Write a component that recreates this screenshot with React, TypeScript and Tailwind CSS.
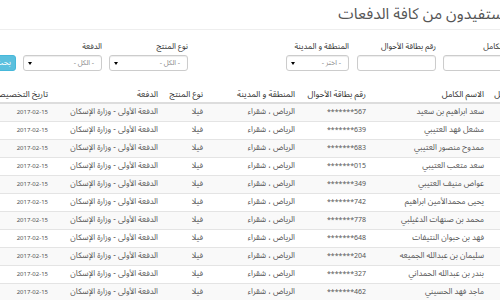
import React from 'react';

const rows: [string, string][] = [
  ['سعد ابراهيم بن سعيد', '*******567'],
  ['مشعل فهد العتيبي', '*******639'],
  ['ممدوح منصور العتيبي', '*******683'],
  ['سعد متعب العتيبي', '*******015'],
  ['عواض منيف العتيبي', '*******349'],
  ['يحيى محمدالأمين ابراهيم', '*******742'],
  ['محمد بن صنهات الدغيلبي', '*******778'],
  ['فهد بن حبوان النتيفات', '*******648'],
  ['سليمان بن عبدالله الجميعه', '*******204'],
  ['بندر بن عبدالله الحمداني', '*******327'],
  ['ماجد فهد الحسيني', '*******462'],
];

const font = "font-['Noto_Sans_Arabic','DejaVu_Sans',sans-serif]";

const Label = ({ children }: { children: React.ReactNode }) => (
  <div className="h-[10px] mb-[3px] text-[8px] leading-[10px] text-[#333] whitespace-nowrap">
    {children}
  </div>
);

const SelectBox = ({ text }: { text: string }) => (
  <div className="h-[16px] flex items-center justify-between border border-[#ccc] rounded-[3px] bg-white shadow-[inset_0_1px_1px_rgba(0,0,0,0.075)] pr-[7px] pl-[4px]">
    <span className="text-[7px] text-[#888]">{text}</span>
    <span className="w-0 h-0 border-l-[2px] border-r-[2px] border-t-[3px] border-l-transparent border-r-transparent border-t-black" />
  </div>
);

const TextBox = () => (
  <div className="h-[16px] border border-[#ccc] rounded-[3px] bg-white shadow-[inset_0_1px_1px_rgba(0,0,0,0.075)]" />
);

export default function App() {
  return (
    <div className={`w-[500px] h-[300px] overflow-hidden bg-white ${font}`}>
      <div dir="rtl" className="ml-[-20px] w-[545px]">
        {/* Title */}
        <div className="h-[30px] border-b border-[#eee] pr-[4px] flex items-center">
          <h1 className="text-[15.5px] leading-none text-[#555] whitespace-nowrap">
            المستفيدون من كافة الدفعات
          </h1>
        </div>

        {/* Filters */}
        <div className="flex items-end pt-[12px] pr-[2px]">
          <div className="w-[80px]">
            <Label>الاسم الكامل</Label>
            <TextBox />
          </div>
          <div className="w-[79px] mr-[7px]">
            <Label>رقم بطاقة الأحوال</Label>
            <TextBox />
          </div>
          <div className="w-[63px] mr-[8px]">
            <Label>المنطقة و المدينة</Label>
            <SelectBox text="- اختر -" />
          </div>
          <div className="w-[79px] mr-[98px]">
            <Label>نوع المنتج</Label>
            <SelectBox text="- الكل -" />
          </div>
          <div className="w-[79px] mr-[7px]">
            <Label>الدفعة</Label>
            <SelectBox text="- الكل -" />
          </div>
          <button className="w-[30px] h-[16px] mr-[7px] rounded-[3px] bg-[#5bc0de] border border-[#46b8da] text-white text-[8px] text-right pr-[4px] leading-none">
            بحث
          </button>
        </div>

        {/* Table */}
        <table className="mt-[15px] w-[545px] table-fixed border-collapse text-[8px] text-[#555]">
          <colgroup>
            <col className="w-[36px]" />
            <col className="w-[118px]" />
            <col className="w-[71px]" />
            <col className="w-[92px]" />
            <col className="w-[45px]" />
            <col className="w-[110px]" />
            <col className="w-[73px]" />
          </colgroup>
          <thead>
            <tr className="h-[17px] border-b-2 border-[#ddd] text-[#333] text-right text-[8.5px]">
              <th className="pr-[5px] whitespace-nowrap font-normal">تسلسل</th>
              <th className="pr-[5px] whitespace-nowrap font-normal">الاسم الكامل</th>
              <th className="pr-[5px] whitespace-nowrap font-normal">رقم بطاقة الأحوال</th>
              <th className="pr-[5px] whitespace-nowrap font-normal">المنطقة و المدينة</th>
              <th className="pr-[5px] whitespace-nowrap font-normal">نوع المنتج</th>
              <th className="pr-[5px] whitespace-nowrap font-normal">الدفعة</th>
              <th className="pr-[5px] whitespace-nowrap font-normal">تاريخ التخصيص</th>
            </tr>
          </thead>
          <tbody>
            {rows.map(([name, id], i) => (
              <tr
                key={id}
                className={`h-[18px] border-b border-[#e4e4e4] ${i % 2 === 0 ? 'bg-[#f9f9f9]' : 'bg-white'}`}
              >
                <td className="pr-[5px] whitespace-nowrap">{i + 1}</td>
                <td className="pr-[5px] whitespace-nowrap">{name}</td>
                <td className="pr-[5px] whitespace-nowrap text-[7px]">
                  <span dir="ltr">{id}</span>
                </td>
                <td className="pr-[5px] whitespace-nowrap">الرياض ، شقراء</td>
                <td className="pr-[5px] whitespace-nowrap">فيلا</td>
                <td className="pr-[5px] whitespace-nowrap">الدفعة الأولى - وزارة الإسكان</td>
                <td className="pr-[5px] whitespace-nowrap text-[6px]">2017-02-15</td>
              </tr>
            ))}
          </tbody>
        </table>
      </div>
    </div>
  );
}
